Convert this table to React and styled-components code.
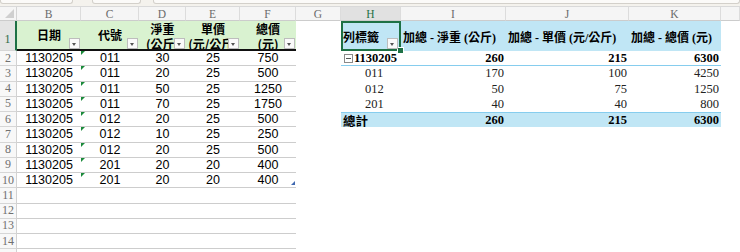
import React from 'react';
import styled, { createGlobalStyle, css } from 'styled-components';

const GlobalStyle = createGlobalStyle`
  html, body { margin: 0; padding: 0; background: #fff; }
  body { width: 740px; height: 252px; overflow: hidden; font-family: "Liberation Sans", "Noto Sans CJK TC", sans-serif; }
`;

const Page = styled.div`
  display: flex;
  flex-direction: column;
  width: 740px;
  height: 252px;
  overflow: hidden;
  background: #fff;
`;

const TopBar = styled.div`
  height: 7px;
  flex: none;
  display: flex;
  align-items: flex-start;
  background: #f4f2ed;
  border-bottom: 1px solid #d9d9d9;
  box-sizing: border-box;
`;

const BarBox = styled.div`
  height: 4px;
  box-sizing: border-box;
  background: #fbfaf8;
  border: 1px solid #d3d0ca;
  border-top: none;
  border-radius: 0 0 3px 3px;
  margin-left: ${p => p.$ml}px;
  width: ${p => (p.$w ? `${p.$w}px` : 'auto')};
  flex: ${p => (p.$w ? 'none' : 1)};
`;

const Sheet = styled.div`
  display: grid;
  grid-template-columns: 17px 64px 58px 47px 54px 56px 45px 60px 105px 123px 92px 1fr;
  grid-template-rows: 14px 30px;
  grid-auto-rows: 15.25px;
  flex: 1;
  min-height: 0;
  overflow: hidden;
`;

const base = css`
  box-sizing: border-box;
  min-width: 0;
  position: relative;
  display: flex;
  align-items: center;
  overflow: hidden;
  white-space: nowrap;
`;

const Corner = styled.div`
  ${base}
  background: #f5f5f5;
  border-right: 1px solid #d4d4d4;
  border-bottom: 1px solid #cccccc;
  &::after {
    content: '';
    position: absolute;
    right: 2px;
    bottom: 2px;
    border-left: 9px solid transparent;
    border-bottom: 9px solid #cfcfcf;
  }
`;

const ColHead = styled.div`
  ${base}
  justify-content: center;
  background: ${p => (p.$active ? '#e1e1e1' : '#f5f5f5')};
  color: ${p => (p.$active ? '#1e7145' : '#6a6a6a')};
  font: 11.5px "Liberation Serif", serif;
  border-right: 1px solid #dcdcdc;
  border-bottom: 1px solid #cccccc;
`;

const RowHead = styled.div`
  ${base}
  justify-content: center;
  align-items: ${p => (p.$active ? 'flex-end' : 'center')};
  padding-bottom: ${p => (p.$active ? '3px' : '0')};
  background: ${p => (p.$active ? '#e4e4e4' : '#f8f8f8')};
  color: ${p => (p.$active ? '#2f6b45' : '#707070')};
  font: 12px "Liberation Serif", serif;
  border-right: ${p => (p.$active ? '2px solid #1e7145' : '1px solid #d2d2d2')};
  border-bottom: 1px solid #d6d6d6;
`;

const TableHead = styled.div`
  ${base}
  flex-direction: column;
  justify-content: ${p => (p.$wrap ? 'flex-start' : 'center')};
  align-items: center;
  padding-top: ${p => (p.$wrap ? '1px' : '0')};
  background: #d9f2d0;
  border-bottom: 2px solid #111;
  font: bold 12px/14.5px "Noto Sans CJK TC", sans-serif;
  color: #000;
`;

const HeadLine = styled.span`
  display: block;
  white-space: nowrap;
`;

const FilterBtn = styled.span`
  position: absolute;
  right: ${p => p.$r}px;
  bottom: ${p => p.$b}px;
  width: 11px;
  height: 11px;
  box-sizing: border-box;
  border: 1px solid #bdbdbd;
  background: #fafafa;
  z-index: 2;
  &::after {
    content: '';
    position: absolute;
    left: 2px;
    top: 4px;
    border-left: 2.5px solid transparent;
    border-right: 2.5px solid transparent;
    border-top: 3px solid #555;
  }
`;

const DataCell = styled.div`
  ${base}
  justify-content: center;
  font: 12.5px "Liberation Sans", sans-serif;
  color: #000;
  border-bottom: 1px solid #cdcdcd;
  ${p => p.$flag && css`
    &::before {
      content: '';
      position: absolute;
      left: 0;
      top: 0;
      border-top: 4px solid #1a8a3a;
      border-right: 4px solid transparent;
    }
  `}
  ${p => p.$handle && css`
    &::after {
      content: '';
      position: absolute;
      right: 1px;
      bottom: 2px;
      border-left: 4px solid transparent;
      border-bottom: 4px solid #3f68b0;
    }
  `}
`;

const Blank = styled.div`
  ${base}
  background: #fff;
`;

const PivotHead = styled.div`
  ${base}
  background: #c0e6f5;
  color: #000;
  font: bold 12px "Liberation Serif", "Noto Sans CJK TC", serif;
  padding: 2px 0 0 2px;
  ${p => p.$selected && css`
    overflow: visible;
    z-index: 3;
    outline: 2px solid #1e7145;
    outline-offset: -2px;
    &::after {
      content: '';
      position: absolute;
      right: -3px;
      bottom: -3px;
      width: 5px;
      height: 5px;
      background: #1e7145;
      border: 1px solid #fff;
    }
  `}
`;

const PivotCell = styled.div`
  ${base}
  font: ${p => (p.$kind === 'item' ? 400 : 700)} 12.5px "Liberation Serif", "Noto Sans CJK TC", serif;
  color: ${p => (p.$kind === 'item' ? '#222' : '#000')};
  justify-content: ${p => (p.$num ? 'flex-end' : 'flex-start')};
  padding-right: 2px;
  padding-left: ${p => (p.$kind === 'item' && !p.$num ? '24px' : p.$kind === 'group' && !p.$num ? '3px' : '2px')};
  background: ${p => (p.$kind === 'total' ? '#c0e6f5' : '#fff')};
  border-bottom: ${p => (p.$kind === 'group' ? '1px solid #86cdee' : 'none')};
  border-top: ${p => (p.$kind === 'total' ? '1px solid #86cdee' : 'none')};
  gap: 1px;
`;

const Collapse = () => (
  <svg width="9" height="9" viewBox="0 0 9 9" aria-hidden="true">
    <rect x="0.5" y="0.5" width="8" height="8" fill="#fff" stroke="#8a8a8a" />
    <line x1="2" y1="4.5" x2="7" y2="4.5" stroke="#555" />
  </svg>
);

const colLetters = ['B', 'C', 'D', 'E', 'F', 'G', 'H', 'I', 'J', 'K', ''];

const tableHeads = [['日期'], ['代號'], ['淨重', '(公斤)'], ['單價', '(元/公斤)'], ['總價', '(元)']];

const tableRows = [
  ['1130205', '011', '30', '25', '750'],
  ['1130205', '011', '20', '25', '500'],
  ['1130205', '011', '50', '25', '1250'],
  ['1130205', '011', '70', '25', '1750'],
  ['1130205', '012', '20', '25', '500'],
  ['1130205', '012', '10', '25', '250'],
  ['1130205', '012', '20', '25', '500'],
  ['1130205', '201', '20', '20', '400'],
  ['1130205', '201', '20', '20', '400'],
];

const pivotHeads = ['列標籤', '加總 - 淨重 (公斤)', '加總 - 單價 (元/公斤)', '加總 - 總價 (元)'];

const pivotRows = [
  { label: '1130205', kind: 'group', vals: ['260', '215', '6300'] },
  { label: '011', kind: 'item', vals: ['170', '100', '4250'] },
  { label: '012', kind: 'item', vals: ['50', '75', '1250'] },
  { label: '201', kind: 'item', vals: ['40', '40', '800'] },
  { label: '總計', kind: 'total', vals: ['260', '215', '6300'] },
];

const LAST_ROW = 15;
const VISIBLE_NUM = 14;

export default function App() {
  const cells = [];

  cells.push(<Corner key="corner" />);
  colLetters.forEach((l, i) => {
    cells.push(<ColHead key={`ch${i}`} $active={l === 'H'}>{l}</ColHead>);
  });

  cells.push(<RowHead key="rh1" $active>1</RowHead>);
  tableHeads.forEach((lines, i) => {
    cells.push(
      <TableHead key={`th${i}`} $wrap={lines.length > 1}>
        {lines.map(t => <HeadLine key={t}>{t}</HeadLine>)}
        <FilterBtn $r={1} $b={0} />
      </TableHead>
    );
  });
  cells.push(<Blank key="g1" />);
  pivotHeads.forEach((t, i) => {
    cells.push(
      <PivotHead key={`ph${i}`} $selected={i === 0}>
        {t}
        {i === 0 && <FilterBtn $r={3} $b={2} />}
      </PivotHead>
    );
  });
  cells.push(<Blank key="l1" />);

  for (let r = 2; r <= LAST_ROW; r++) {
    cells.push(<RowHead key={`rh${r}`}>{r <= VISIBLE_NUM ? r : ''}</RowHead>);
    const data = tableRows[r - 2];
    for (let c = 0; c < 5; c++) {
      cells.push(
        <DataCell key={`d${r}-${c}`} $flag={data && c === 1} $handle={r === 10 && c === 4}>
          {data ? data[c] : ''}
        </DataCell>
      );
    }
    cells.push(<Blank key={`g${r}`} />);
    const pr = pivotRows[r - 2];
    if (pr) {
      cells.push(
        <PivotCell key={`pl${r}`} $kind={pr.kind}>
          {pr.kind === 'group' && <Collapse />}
          {pr.label}
        </PivotCell>
      );
      pr.vals.forEach((v, i) => {
        cells.push(<PivotCell key={`pv${r}-${i}`} $kind={pr.kind} $num>{v}</PivotCell>);
      });
    } else {
      for (let i = 0; i < 4; i++) cells.push(<Blank key={`pb${r}-${i}`} />);
    }
    cells.push(<Blank key={`l${r}`} />);
  }

  return (
    <Page>
      <GlobalStyle />
      <TopBar>
        <BarBox $ml={0} $w={73} />
        <BarBox $ml={19} $w={49} />
        <BarBox $ml={12} />
      </TopBar>
      <Sheet>{cells}</Sheet>
    </Page>
  );
}
